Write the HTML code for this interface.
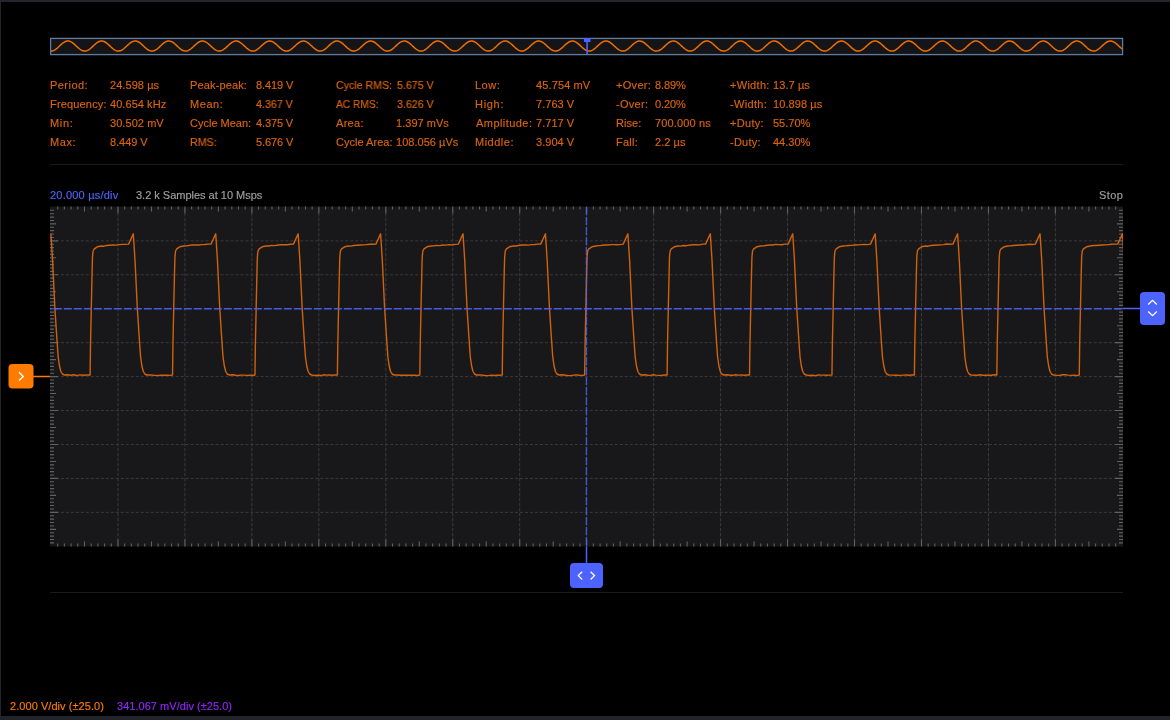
<!DOCTYPE html>
<html><head><meta charset="utf-8">
<style>
html,body{margin:0;padding:0;background:#000;}
body{width:1170px;height:720px;position:relative;overflow:hidden;font-family:"Liberation Sans",sans-serif;}
.t{position:absolute;font-size:11px;-webkit-text-stroke:0.15px currentColor;will-change:transform;line-height:15px;white-space:nowrap;color:#dc650c;}
#topb{position:absolute;left:0;top:0;width:1170px;height:2px;background:#23242c;}
#leftb{position:absolute;left:0;top:0;width:1px;height:720px;background:#23242c;}
#botb{position:absolute;left:0;top:716px;width:1170px;height:4px;background:#22232b;}
.sep{position:absolute;left:50px;width:1073px;height:1px;background:#1b1b1d;}
.btn{position:absolute;border-radius:4px;}
svg{position:absolute;left:0;top:0;}
</style></head><body>
<div id="topb"></div><div id="leftb"></div><div id="botb"></div>
<div class="t" style="left:49.88px;top:78px;letter-spacing:0.459px;">Period:</div><div class="t" style="left:110.38px;top:78px;letter-spacing:0.062px;">24.598 µs</div><div class="t" style="left:49.88px;top:97px;letter-spacing:0.168px;">Frequency:</div><div class="t" style="left:110.38px;top:97px;letter-spacing:0.055px;">40.654 kHz</div><div class="t" style="left:50.12px;top:116px;letter-spacing:0.667px;">Min:</div><div class="t" style="left:110.38px;top:116px;letter-spacing:0.062px;">30.502 mV</div><div class="t" style="left:50.12px;top:135px;letter-spacing:0.584px;">Max:</div><div class="t" style="left:110.38px;top:135px;letter-spacing:-0.042px;">8.449 V</div><div class="t" style="left:189.88px;top:78px;letter-spacing:0.140px;">Peak-peak:</div><div class="t" style="left:255.88px;top:78px;letter-spacing:-0.084px;">8.419 V</div><div class="t" style="left:189.88px;top:97px;letter-spacing:0.562px;">Mean:</div><div class="t" style="left:256.38px;top:97px;transform:scaleX(0.9736);transform-origin:0 0;">4.367 V</div><div class="t" style="left:190.38px;top:116px;">Cycle Mean:</div><div class="t" style="left:255.62px;top:116px;letter-spacing:-0.124px;">4.375 V</div><div class="t" style="left:189.88px;top:135px;transform:scaleX(0.9712);transform-origin:0 0;">RMS:</div><div class="t" style="left:255.88px;top:135px;letter-spacing:-0.084px;">5.676 V</div><div class="t" style="left:335.62px;top:78px;transform:scaleX(0.9650);transform-origin:0 0;">Cycle RMS:</div><div class="t" style="left:396.62px;top:78px;transform:scaleX(0.9667);transform-origin:0 0;">5.675 V</div><div class="t" style="left:335.62px;top:97px;transform:scaleX(0.9278);transform-origin:0 0;">AC RMS:</div><div class="t" style="left:396.62px;top:97px;transform:scaleX(0.9667);transform-origin:0 0;">3.626 V</div><div class="t" style="left:335.62px;top:116px;letter-spacing:0.312px;">Area:</div><div class="t" style="left:396.12px;top:116px;letter-spacing:0.033px;">1.397 mVs</div><div class="t" style="left:335.62px;top:135px;letter-spacing:0.025px;">Cycle Area:</div><div class="t" style="left:396.12px;top:135px;letter-spacing:0.025px;">108.056 µVs</div><div class="t" style="left:475.38px;top:78px;letter-spacing:0.500px;">Low:</div><div class="t" style="left:536.38px;top:78px;letter-spacing:0.125px;">45.754 mV</div><div class="t" style="left:475.38px;top:97px;letter-spacing:0.688px;">High:</div><div class="t" style="left:535.88px;top:97px;letter-spacing:0.042px;">7.763 V</div><div class="t" style="left:476.38px;top:116px;letter-spacing:0.444px;">Amplitude:</div><div class="t" style="left:535.88px;top:116px;letter-spacing:0.042px;">7.717 V</div><div class="t" style="left:475.38px;top:135px;letter-spacing:0.501px;">Middle:</div><div class="t" style="left:535.88px;top:135px;letter-spacing:0.042px;">3.904 V</div><div class="t" style="left:616.12px;top:78px;letter-spacing:0.300px;">+Over:</div><div class="t" style="left:654.62px;top:78px;letter-spacing:-0.125px;">8.89%</div><div class="t" style="left:616.12px;top:97px;letter-spacing:0.300px;">-Over:</div><div class="t" style="left:654.62px;top:97px;letter-spacing:-0.125px;">0.20%</div><div class="t" style="left:615.62px;top:116px;letter-spacing:0.062px;">Rise:</div><div class="t" style="left:654.62px;top:116px;letter-spacing:0.140px;">700.000 ns</div><div class="t" style="left:615.62px;top:135px;letter-spacing:0.250px;">Fall:</div><div class="t" style="left:654.62px;top:135px;letter-spacing:0.050px;">2.2 µs</div><div class="t" style="left:730.12px;top:78px;letter-spacing:0.291px;">+Width:</div><div class="t" style="left:772.88px;top:78px;letter-spacing:0.084px;">13.7 µs</div><div class="t" style="left:730.12px;top:97px;letter-spacing:0.334px;">-Width:</div><div class="t" style="left:772.88px;top:97px;letter-spacing:0.092px;">10.898 µs</div><div class="t" style="left:730.12px;top:116px;letter-spacing:0.300px;">+Duty:</div><div class="t" style="left:773.38px;top:116px;">55.70%</div><div class="t" style="left:730.12px;top:135px;letter-spacing:0.250px;">-Duty:</div><div class="t" style="left:773.38px;top:135px;">44.30%</div><div class="t" style="left:50.38px;top:188px;letter-spacing:0.209px;color:#5064fa;">20.000 µs/div</div><div class="t" style="left:136.38px;top:188px;letter-spacing:-0.011px;color:#a0a0a0;">3.2 k Samples at 10 Msps</div><div class="t" style="left:1099.12px;top:188px;letter-spacing:0.417px;color:#a0a0a0;">Stop</div><div class="t" style="left:9.88px;top:699px;letter-spacing:0.055px;color:#ff7a00;">2.000 V/div (±25.0)</div><div class="t" style="left:116.62px;top:699px;letter-spacing:0.036px;color:#9226f8;">341.067 mV/div (±25.0)</div>
<div class="sep" style="top:164px"></div>
<div class="sep" style="top:592px"></div>
<svg width="1170" height="720" viewBox="0 0 1170 720">
 <rect x="50.6" y="38.4" width="1072" height="16.2" fill="#151517" stroke="#5d7ba3" stroke-width="1.3"/>
 <path d="M51 51.1 L52 51.03 L53 50.78 L54 50.37 L55 49.81 L56 49.12 L57 48.32 L58 47.44 L59 46.51 L60 45.57 L61 44.65 L62 43.77 L63 42.97 L64 42.28 L65 41.72 L66 41.31 L67 41.07 L68 41 L69 41.11 L70 41.38 L71 41.82 L72 42.41 L73 43.12 L74 43.94 L75 44.83 L76 45.76 L77 46.7 L78 47.62 L79 48.48 L80 49.26 L81 49.93 L82 50.46 L83 50.84 L84 51.06 L85 51.09 L86 50.96 L87 50.65 L88 50.18 L89 49.57 L90 48.83 L91 48 L92 47.1 L93 46.17 L94 45.23 L95 44.31 L96 43.46 L97 42.7 L98 42.06 L99 41.55 L100 41.2 L101 41.02 L102 41.02 L103 41.19 L104 41.53 L105 42.02 L106 42.66 L107 43.42 L108 44.26 L109 45.17 L110 46.11 L111 47.05 L112 47.95 L113 48.78 L114 49.53 L115 50.15 L116 50.62 L117 50.94 L118 51.09 L119 51.06 L120 50.86 L121 50.49 L122 49.97 L123 49.31 L124 48.53 L125 47.67 L126 46.76 L127 45.82 L128 44.88 L129 43.99 L130 43.17 L131 42.45 L132 41.85 L133 41.41 L134 41.12 L135 41 L136 41.06 L137 41.3 L138 41.69 L139 42.24 L140 42.93 L141 43.72 L142 44.59 L143 45.52 L144 46.46 L145 47.39 L146 48.27 L147 49.07 L148 49.77 L149 50.34 L150 50.76 L151 51.02 L152 51.1 L153 51.01 L154 50.74 L155 50.31 L156 49.74 L157 49.03 L158 48.22 L159 47.34 L160 46.41 L161 45.47 L162 44.55 L163 43.68 L164 42.89 L165 42.21 L166 41.67 L167 41.28 L168 41.05 L169 41 L170 41.13 L171 41.42 L172 41.88 L173 42.48 L174 43.21 L175 44.03 L176 44.93 L177 45.86 L178 46.8 L179 47.72 L180 48.57 L181 49.34 L182 50 L183 50.51 L184 50.87 L185 51.07 L186 51.09 L187 50.93 L188 50.6 L189 50.12 L190 49.49 L191 48.74 L192 47.9 L193 47 L194 46.06 L195 45.12 L196 44.22 L197 43.38 L198 42.63 L199 42 L200 41.51 L201 41.18 L202 41.02 L203 41.03 L204 41.22 L205 41.58 L206 42.09 L207 42.74 L208 43.5 L209 44.36 L210 45.27 L211 46.21 L212 47.15 L213 48.04 L214 48.87 L215 49.6 L216 50.21 L217 50.67 L218 50.97 L219 51.1 L220 51.05 L221 50.83 L222 50.44 L223 49.9 L224 49.23 L225 48.44 L226 47.58 L227 46.65 L228 45.71 L229 44.78 L230 43.9 L231 43.09 L232 42.38 L233 41.8 L234 41.37 L235 41.1 L236 41 L237 41.08 L238 41.33 L239 41.75 L240 42.31 L241 43.01 L242 43.81 L243 44.69 L244 45.62 L245 46.56 L246 47.49 L247 48.36 L248 49.15 L249 49.84 L250 50.39 L251 50.8 L252 51.03 L253 51.1 L254 50.99 L255 50.7 L256 50.26 L257 49.67 L258 48.95 L259 48.13 L260 47.24 L261 46.31 L262 45.37 L263 44.45 L264 43.59 L265 42.81 L266 42.15 L267 41.62 L268 41.25 L269 41.04 L270 41.01 L271 41.15 L272 41.47 L273 41.94 L274 42.56 L275 43.3 L276 44.13 L277 45.03 L278 45.97 L279 46.91 L280 47.82 L281 48.66 L282 49.42 L283 50.06 L284 50.56 L285 50.9 L286 51.08 L287 51.08 L288 50.9 L289 50.56 L290 50.06 L291 49.41 L292 48.66 L293 47.81 L294 46.9 L295 45.96 L296 45.02 L297 44.12 L298 43.29 L299 42.55 L300 41.94 L301 41.46 L302 41.15 L303 41.01 L304 41.04 L305 41.25 L306 41.62 L307 42.15 L308 42.82 L309 43.59 L310 44.46 L311 45.38 L312 46.32 L313 47.25 L314 48.14 L315 48.96 L316 49.67 L317 50.26 L318 50.71 L319 50.99 L320 51.1 L321 51.03 L322 50.79 L323 50.39 L324 49.83 L325 49.15 L326 48.35 L327 47.48 L328 46.55 L329 45.61 L330 44.68 L331 43.8 L332 43 L333 42.31 L334 41.74 L335 41.33 L336 41.08 L337 41 L338 41.1 L339 41.37 L340 41.8 L341 42.38 L342 43.09 L343 43.91 L344 44.79 L345 45.72 L346 46.66 L347 47.58 L348 48.45 L349 49.23 L350 49.91 L351 50.45 L352 50.83 L353 51.05 L354 51.09 L355 50.96 L356 50.66 L357 50.2 L358 49.59 L359 48.86 L360 48.04 L361 47.14 L362 46.2 L363 45.26 L364 44.35 L365 43.5 L366 42.73 L367 42.08 L368 41.57 L369 41.22 L370 41.03 L371 41.02 L372 41.18 L373 41.51 L374 42 L375 42.63 L376 43.38 L377 44.23 L378 45.13 L379 46.07 L380 47.01 L381 47.91 L382 48.75 L383 49.5 L384 50.12 L385 50.61 L386 50.93 L387 51.09 L388 51.07 L389 50.87 L390 50.51 L391 49.99 L392 49.34 L393 48.57 L394 47.71 L395 46.79 L396 45.85 L397 44.92 L398 44.03 L399 43.2 L400 42.48 L401 41.88 L402 41.42 L403 41.13 L404 41 L405 41.06 L406 41.28 L407 41.68 L408 42.22 L409 42.9 L410 43.69 L411 44.56 L412 45.48 L413 46.42 L414 47.35 L415 48.23 L416 49.04 L417 49.74 L418 50.32 L419 50.75 L420 51.01 L421 51.1 L422 51.01 L423 50.76 L424 50.33 L425 49.76 L426 49.06 L427 48.26 L428 47.38 L429 46.45 L430 45.51 L431 44.58 L432 43.71 L433 42.92 L434 42.24 L435 41.69 L436 41.29 L437 41.06 L438 41 L439 41.12 L440 41.41 L441 41.86 L442 42.46 L443 43.18 L444 44 L445 44.89 L446 45.83 L447 46.77 L448 47.68 L449 48.54 L450 49.31 L451 49.97 L452 50.5 L453 50.86 L454 51.06 L455 51.09 L456 50.94 L457 50.62 L458 50.14 L459 49.52 L460 48.78 L461 47.94 L462 47.04 L463 46.1 L464 45.16 L465 44.25 L466 43.41 L467 42.65 L468 42.02 L469 41.52 L470 41.19 L471 41.02 L472 41.03 L473 41.21 L474 41.56 L475 42.06 L476 42.71 L477 43.47 L478 44.32 L479 45.24 L480 46.18 L481 47.11 L482 48.01 L483 48.84 L484 49.57 L485 50.18 L486 50.65 L487 50.96 L488 51.09 L489 51.05 L490 50.84 L491 50.46 L492 49.93 L493 49.26 L494 48.48 L495 47.61 L496 46.69 L497 45.75 L498 44.82 L499 43.93 L500 43.12 L501 42.4 L502 41.82 L503 41.38 L504 41.1 L505 41 L506 41.07 L507 41.32 L508 41.73 L509 42.29 L510 42.98 L511 43.78 L512 44.66 L513 45.58 L514 46.52 L515 47.45 L516 48.33 L517 49.12 L518 49.81 L519 50.37 L520 50.78 L521 51.03 L522 51.1 L523 50.99 L524 50.72 L525 50.28 L526 49.69 L527 48.98 L528 48.16 L529 47.28 L530 46.34 L531 45.4 L532 44.48 L533 43.62 L534 42.84 L535 42.17 L536 41.64 L537 41.26 L538 41.05 L539 41.01 L540 41.14 L541 41.45 L542 41.92 L543 42.53 L544 43.26 L545 44.1 L546 44.99 L547 45.93 L548 46.87 L549 47.78 L550 48.63 L551 49.39 L552 50.04 L553 50.54 L554 50.89 L555 51.07 L556 51.08 L557 50.91 L558 50.57 L559 50.08 L560 49.44 L561 48.69 L562 47.84 L563 46.93 L564 46 L565 45.06 L566 44.16 L567 43.32 L568 42.58 L569 41.96 L570 41.48 L571 41.16 L572 41.01 L573 41.04 L574 41.24 L575 41.61 L576 42.13 L577 42.79 L578 43.56 L579 44.42 L580 45.34 L581 46.28 L582 47.21 L583 48.1 L584 48.93 L585 49.65 L586 50.24 L587 50.69 L588 50.98 L589 51.1 L590 51.04 L591 50.81 L592 50.41 L593 49.86 L594 49.18 L595 48.38 L596 47.51 L597 46.59 L598 45.65 L599 44.72 L600 43.84 L601 43.03 L602 42.33 L603 41.76 L604 41.34 L605 41.08 L606 41 L607 41.09 L608 41.36 L609 41.78 L610 42.36 L611 43.06 L612 43.87 L613 44.76 L614 45.68 L615 46.63 L616 47.55 L617 48.42 L618 49.21 L619 49.88 L620 50.43 L621 50.82 L622 51.04 L623 51.1 L624 50.97 L625 50.68 L626 50.22 L627 49.62 L628 48.89 L629 48.07 L630 47.18 L631 46.24 L632 45.3 L633 44.39 L634 43.53 L635 42.76 L636 42.11 L637 41.59 L638 41.23 L639 41.03 L640 41.01 L641 41.17 L642 41.5 L643 41.98 L644 42.61 L645 43.35 L646 44.19 L647 45.1 L648 46.03 L649 46.97 L650 47.88 L651 48.72 L652 49.47 L653 50.1 L654 50.59 L655 50.92 L656 51.08 L657 51.07 L658 50.88 L659 50.53 L660 50.01 L661 49.36 L662 48.6 L663 47.75 L664 46.83 L665 45.89 L666 44.96 L667 44.06 L668 43.23 L669 42.5 L670 41.9 L671 41.44 L672 41.13 L673 41.01 L674 41.05 L675 41.27 L676 41.66 L677 42.2 L678 42.87 L679 43.65 L680 44.52 L681 45.44 L682 46.38 L683 47.31 L684 48.2 L685 49.01 L686 49.72 L687 50.3 L688 50.73 L689 51 L690 51.1 L691 51.02 L692 50.77 L693 50.35 L694 49.79 L695 49.09 L696 48.29 L697 47.41 L698 46.49 L699 45.54 L700 44.62 L701 43.74 L702 42.95 L703 42.26 L704 41.71 L705 41.31 L706 41.07 L707 41 L708 41.11 L709 41.39 L710 41.84 L711 42.43 L712 43.15 L713 43.97 L714 44.86 L715 45.79 L716 46.73 L717 47.65 L718 48.51 L719 49.29 L720 49.95 L721 50.48 L722 50.85 L723 51.06 L724 51.09 L725 50.95 L726 50.63 L727 50.16 L728 49.55 L729 48.81 L730 47.97 L731 47.07 L732 46.14 L733 45.2 L734 44.29 L735 43.44 L736 42.68 L737 42.04 L738 41.54 L739 41.2 L740 41.02 L741 41.02 L742 41.2 L743 41.54 L744 42.04 L745 42.68 L746 43.44 L747 44.29 L748 45.2 L749 46.14 L750 47.07 L751 47.97 L752 48.81 L753 49.55 L754 50.16 L755 50.63 L756 50.95 L757 51.09 L758 51.06 L759 50.85 L760 50.48 L761 49.95 L762 49.29 L763 48.51 L764 47.65 L765 46.73 L766 45.79 L767 44.86 L768 43.97 L769 43.15 L770 42.43 L771 41.84 L772 41.39 L773 41.11 L774 41 L775 41.07 L776 41.31 L777 41.71 L778 42.26 L779 42.95 L780 43.74 L781 44.62 L782 45.54 L783 46.49 L784 47.41 L785 48.29 L786 49.09 L787 49.79 L788 50.35 L789 50.77 L790 51.02 L791 51.1 L792 51 L793 50.73 L794 50.3 L795 49.72 L796 49.01 L797 48.2 L798 47.31 L799 46.38 L800 45.44 L801 44.52 L802 43.65 L803 42.87 L804 42.2 L805 41.66 L806 41.27 L807 41.05 L808 41.01 L809 41.13 L810 41.44 L811 41.9 L812 42.5 L813 43.23 L814 44.06 L815 44.96 L816 45.89 L817 46.83 L818 47.75 L819 48.6 L820 49.36 L821 50.01 L822 50.53 L823 50.88 L824 51.07 L825 51.08 L826 50.92 L827 50.59 L828 50.1 L829 49.47 L830 48.72 L831 47.88 L832 46.97 L833 46.03 L834 45.1 L835 44.19 L836 43.35 L837 42.61 L838 41.98 L839 41.5 L840 41.17 L841 41.01 L842 41.03 L843 41.23 L844 41.59 L845 42.11 L846 42.76 L847 43.53 L848 44.39 L849 45.3 L850 46.24 L851 47.18 L852 48.07 L853 48.89 L854 49.62 L855 50.22 L856 50.68 L857 50.97 L858 51.1 L859 51.04 L860 50.82 L861 50.43 L862 49.88 L863 49.21 L864 48.42 L865 47.55 L866 46.63 L867 45.68 L868 44.76 L869 43.87 L870 43.06 L871 42.36 L872 41.78 L873 41.36 L874 41.09 L875 41 L876 41.08 L877 41.34 L878 41.76 L879 42.33 L880 43.03 L881 43.84 L882 44.72 L883 45.65 L884 46.59 L885 47.51 L886 48.38 L887 49.18 L888 49.86 L889 50.41 L890 50.81 L891 51.04 L892 51.1 L893 50.98 L894 50.69 L895 50.24 L896 49.65 L897 48.93 L898 48.1 L899 47.21 L900 46.28 L901 45.34 L902 44.42 L903 43.56 L904 42.79 L905 42.13 L906 41.61 L907 41.24 L908 41.04 L909 41.01 L910 41.16 L911 41.48 L912 41.96 L913 42.58 L914 43.32 L915 44.16 L916 45.06 L917 46 L918 46.93 L919 47.84 L920 48.69 L921 49.44 L922 50.08 L923 50.57 L924 50.91 L925 51.08 L926 51.07 L927 50.89 L928 50.54 L929 50.04 L930 49.39 L931 48.63 L932 47.78 L933 46.87 L934 45.93 L935 44.99 L936 44.1 L937 43.26 L938 42.53 L939 41.92 L940 41.45 L941 41.14 L942 41.01 L943 41.05 L944 41.26 L945 41.64 L946 42.17 L947 42.84 L948 43.62 L949 44.48 L950 45.4 L951 46.34 L952 47.28 L953 48.16 L954 48.98 L955 49.69 L956 50.28 L957 50.72 L958 50.99 L959 51.1 L960 51.03 L961 50.78 L962 50.37 L963 49.81 L964 49.12 L965 48.33 L966 47.45 L967 46.52 L968 45.58 L969 44.66 L970 43.78 L971 42.98 L972 42.29 L973 41.73 L974 41.32 L975 41.07 L976 41 L977 41.1 L978 41.38 L979 41.82 L980 42.4 L981 43.12 L982 43.93 L983 44.82 L984 45.75 L985 46.69 L986 47.61 L987 48.48 L988 49.26 L989 49.93 L990 50.46 L991 50.84 L992 51.05 L993 51.09 L994 50.96 L995 50.65 L996 50.18 L997 49.57 L998 48.84 L999 48.01 L1000 47.11 L1001 46.18 L1002 45.24 L1003 44.32 L1004 43.47 L1005 42.71 L1006 42.06 L1007 41.56 L1008 41.21 L1009 41.03 L1010 41.02 L1011 41.19 L1012 41.52 L1013 42.02 L1014 42.65 L1015 43.41 L1016 44.25 L1017 45.16 L1018 46.1 L1019 47.04 L1020 47.94 L1021 48.78 L1022 49.52 L1023 50.14 L1024 50.62 L1025 50.94 L1026 51.09 L1027 51.06 L1028 50.86 L1029 50.5 L1030 49.97 L1031 49.31 L1032 48.54 L1033 47.68 L1034 46.77 L1035 45.83 L1036 44.89 L1037 44 L1038 43.18 L1039 42.46 L1040 41.86 L1041 41.41 L1042 41.12 L1043 41 L1044 41.06 L1045 41.29 L1046 41.69 L1047 42.24 L1048 42.92 L1049 43.71 L1050 44.58 L1051 45.51 L1052 46.45 L1053 47.38 L1054 48.26 L1055 49.06 L1056 49.76 L1057 50.33 L1058 50.76 L1059 51.01 L1060 51.1 L1061 51.01 L1062 50.75 L1063 50.32 L1064 49.74 L1065 49.04 L1066 48.23 L1067 47.35 L1068 46.42 L1069 45.48 L1070 44.56 L1071 43.69 L1072 42.9 L1073 42.22 L1074 41.68 L1075 41.28 L1076 41.06 L1077 41 L1078 41.13 L1079 41.42 L1080 41.88 L1081 42.48 L1082 43.2 L1083 44.03 L1084 44.92 L1085 45.85 L1086 46.79 L1087 47.71 L1088 48.57 L1089 49.34 L1090 49.99 L1091 50.51 L1092 50.87 L1093 51.07 L1094 51.09 L1095 50.93 L1096 50.61 L1097 50.12 L1098 49.5 L1099 48.75 L1100 47.91 L1101 47.01 L1102 46.07 L1103 45.13 L1104 44.23 L1105 43.38 L1106 42.63 L1107 42 L1108 41.51 L1109 41.18 L1110 41.02 L1111 41.03 L1112 41.22 L1113 41.57 L1114 42.08 L1115 42.73 L1116 43.5 L1117 44.35 L1118 45.26 L1119 46.2 L1120 47.14 L1121 48.04 L1122 48.86" fill="none" stroke="#ee6e00" stroke-width="1.5"/>
 <rect x="584" y="38" width="6.5" height="4" fill="#4d63ff"/>
 <rect x="586.3" y="38" width="1.6" height="16" fill="#4d63ff"/>
 <rect x="50" y="206.5" width="1073" height="340" fill="#18181b"/>
 <g stroke="#3a3a3d" stroke-width="1" stroke-dasharray="3.5 1.5" stroke-dashoffset="3.6"><line x1="117.96" y1="206.5" x2="117.96" y2="546.5"/><line x1="184.92" y1="206.5" x2="184.92" y2="546.5"/><line x1="251.88" y1="206.5" x2="251.88" y2="546.5"/><line x1="318.84" y1="206.5" x2="318.84" y2="546.5"/><line x1="385.8" y1="206.5" x2="385.8" y2="546.5"/><line x1="452.76" y1="206.5" x2="452.76" y2="546.5"/><line x1="519.72" y1="206.5" x2="519.72" y2="546.5"/><line x1="586.68" y1="206.5" x2="586.68" y2="546.5"/><line x1="653.64" y1="206.5" x2="653.64" y2="546.5"/><line x1="720.6" y1="206.5" x2="720.6" y2="546.5"/><line x1="787.56" y1="206.5" x2="787.56" y2="546.5"/><line x1="854.52" y1="206.5" x2="854.52" y2="546.5"/><line x1="921.48" y1="206.5" x2="921.48" y2="546.5"/><line x1="988.44" y1="206.5" x2="988.44" y2="546.5"/><line x1="1055.4" y1="206.5" x2="1055.4" y2="546.5"/></g>
 <g stroke="#3a3a3d" stroke-width="1" stroke-dasharray="3 1.99" stroke-dashoffset="4.07"><line x1="50" y1="240.84" x2="1123" y2="240.84"/><line x1="50" y1="274.78" x2="1123" y2="274.78"/><line x1="50" y1="342.66" x2="1123" y2="342.66"/><line x1="50" y1="376.6" x2="1123" y2="376.6"/><line x1="50" y1="410.54" x2="1123" y2="410.54"/><line x1="50" y1="444.48" x2="1123" y2="444.48"/><line x1="50" y1="478.42" x2="1123" y2="478.42"/><line x1="50" y1="512.36" x2="1123" y2="512.36"/></g>
 <path d="M57.7 206.5v3M57.7 546.5v-3M64.39 206.5v3M64.39 546.5v-3M71.09 206.5v3M71.09 546.5v-3M77.78 206.5v3M77.78 546.5v-3M84.48 206.5v5M84.48 546.5v-5M91.18 206.5v3M91.18 546.5v-3M97.87 206.5v3M97.87 546.5v-3M104.57 206.5v3M104.57 546.5v-3M111.26 206.5v3M111.26 546.5v-3M117.96 206.5v7M117.96 546.5v-7M124.66 206.5v3M124.66 546.5v-3M131.35 206.5v3M131.35 546.5v-3M138.05 206.5v3M138.05 546.5v-3M144.74 206.5v3M144.74 546.5v-3M151.44 206.5v5M151.44 546.5v-5M158.14 206.5v3M158.14 546.5v-3M164.83 206.5v3M164.83 546.5v-3M171.53 206.5v3M171.53 546.5v-3M178.22 206.5v3M178.22 546.5v-3M184.92 206.5v7M184.92 546.5v-7M191.62 206.5v3M191.62 546.5v-3M198.31 206.5v3M198.31 546.5v-3M205.01 206.5v3M205.01 546.5v-3M211.7 206.5v3M211.7 546.5v-3M218.4 206.5v5M218.4 546.5v-5M225.1 206.5v3M225.1 546.5v-3M231.79 206.5v3M231.79 546.5v-3M238.49 206.5v3M238.49 546.5v-3M245.18 206.5v3M245.18 546.5v-3M251.88 206.5v7M251.88 546.5v-7M258.58 206.5v3M258.58 546.5v-3M265.27 206.5v3M265.27 546.5v-3M271.97 206.5v3M271.97 546.5v-3M278.66 206.5v3M278.66 546.5v-3M285.36 206.5v5M285.36 546.5v-5M292.06 206.5v3M292.06 546.5v-3M298.75 206.5v3M298.75 546.5v-3M305.45 206.5v3M305.45 546.5v-3M312.14 206.5v3M312.14 546.5v-3M318.84 206.5v7M318.84 546.5v-7M325.54 206.5v3M325.54 546.5v-3M332.23 206.5v3M332.23 546.5v-3M338.93 206.5v3M338.93 546.5v-3M345.62 206.5v3M345.62 546.5v-3M352.32 206.5v5M352.32 546.5v-5M359.02 206.5v3M359.02 546.5v-3M365.71 206.5v3M365.71 546.5v-3M372.41 206.5v3M372.41 546.5v-3M379.1 206.5v3M379.1 546.5v-3M385.8 206.5v7M385.8 546.5v-7M392.5 206.5v3M392.5 546.5v-3M399.19 206.5v3M399.19 546.5v-3M405.89 206.5v3M405.89 546.5v-3M412.58 206.5v3M412.58 546.5v-3M419.28 206.5v5M419.28 546.5v-5M425.98 206.5v3M425.98 546.5v-3M432.67 206.5v3M432.67 546.5v-3M439.37 206.5v3M439.37 546.5v-3M446.06 206.5v3M446.06 546.5v-3M452.76 206.5v7M452.76 546.5v-7M459.46 206.5v3M459.46 546.5v-3M466.15 206.5v3M466.15 546.5v-3M472.85 206.5v3M472.85 546.5v-3M479.54 206.5v3M479.54 546.5v-3M486.24 206.5v5M486.24 546.5v-5M492.94 206.5v3M492.94 546.5v-3M499.63 206.5v3M499.63 546.5v-3M506.33 206.5v3M506.33 546.5v-3M513.02 206.5v3M513.02 546.5v-3M519.72 206.5v7M519.72 546.5v-7M526.42 206.5v3M526.42 546.5v-3M533.11 206.5v3M533.11 546.5v-3M539.81 206.5v3M539.81 546.5v-3M546.5 206.5v3M546.5 546.5v-3M553.2 206.5v5M553.2 546.5v-5M559.9 206.5v3M559.9 546.5v-3M566.59 206.5v3M566.59 546.5v-3M573.29 206.5v3M573.29 546.5v-3M579.98 206.5v3M579.98 546.5v-3M586.68 206.5v7M586.68 546.5v-7M593.38 206.5v3M593.38 546.5v-3M600.07 206.5v3M600.07 546.5v-3M606.77 206.5v3M606.77 546.5v-3M613.46 206.5v3M613.46 546.5v-3M620.16 206.5v5M620.16 546.5v-5M626.86 206.5v3M626.86 546.5v-3M633.55 206.5v3M633.55 546.5v-3M640.25 206.5v3M640.25 546.5v-3M646.94 206.5v3M646.94 546.5v-3M653.64 206.5v7M653.64 546.5v-7M660.34 206.5v3M660.34 546.5v-3M667.03 206.5v3M667.03 546.5v-3M673.73 206.5v3M673.73 546.5v-3M680.42 206.5v3M680.42 546.5v-3M687.12 206.5v5M687.12 546.5v-5M693.82 206.5v3M693.82 546.5v-3M700.51 206.5v3M700.51 546.5v-3M707.21 206.5v3M707.21 546.5v-3M713.9 206.5v3M713.9 546.5v-3M720.6 206.5v7M720.6 546.5v-7M727.3 206.5v3M727.3 546.5v-3M733.99 206.5v3M733.99 546.5v-3M740.69 206.5v3M740.69 546.5v-3M747.38 206.5v3M747.38 546.5v-3M754.08 206.5v5M754.08 546.5v-5M760.78 206.5v3M760.78 546.5v-3M767.47 206.5v3M767.47 546.5v-3M774.17 206.5v3M774.17 546.5v-3M780.86 206.5v3M780.86 546.5v-3M787.56 206.5v7M787.56 546.5v-7M794.26 206.5v3M794.26 546.5v-3M800.95 206.5v3M800.95 546.5v-3M807.65 206.5v3M807.65 546.5v-3M814.34 206.5v3M814.34 546.5v-3M821.04 206.5v5M821.04 546.5v-5M827.74 206.5v3M827.74 546.5v-3M834.43 206.5v3M834.43 546.5v-3M841.13 206.5v3M841.13 546.5v-3M847.82 206.5v3M847.82 546.5v-3M854.52 206.5v7M854.52 546.5v-7M861.22 206.5v3M861.22 546.5v-3M867.91 206.5v3M867.91 546.5v-3M874.61 206.5v3M874.61 546.5v-3M881.3 206.5v3M881.3 546.5v-3M888 206.5v5M888 546.5v-5M894.7 206.5v3M894.7 546.5v-3M901.39 206.5v3M901.39 546.5v-3M908.09 206.5v3M908.09 546.5v-3M914.78 206.5v3M914.78 546.5v-3M921.48 206.5v7M921.48 546.5v-7M928.18 206.5v3M928.18 546.5v-3M934.87 206.5v3M934.87 546.5v-3M941.57 206.5v3M941.57 546.5v-3M948.26 206.5v3M948.26 546.5v-3M954.96 206.5v5M954.96 546.5v-5M961.66 206.5v3M961.66 546.5v-3M968.35 206.5v3M968.35 546.5v-3M975.05 206.5v3M975.05 546.5v-3M981.74 206.5v3M981.74 546.5v-3M988.44 206.5v7M988.44 546.5v-7M995.14 206.5v3M995.14 546.5v-3M1001.83 206.5v3M1001.83 546.5v-3M1008.53 206.5v3M1008.53 546.5v-3M1015.22 206.5v3M1015.22 546.5v-3M1021.92 206.5v5M1021.92 546.5v-5M1028.62 206.5v3M1028.62 546.5v-3M1035.31 206.5v3M1035.31 546.5v-3M1042.01 206.5v3M1042.01 546.5v-3M1048.7 206.5v3M1048.7 546.5v-3M1055.4 206.5v7M1055.4 546.5v-7M1062.1 206.5v3M1062.1 546.5v-3M1068.79 206.5v3M1068.79 546.5v-3M1075.49 206.5v3M1075.49 546.5v-3M1082.18 206.5v3M1082.18 546.5v-3M1088.88 206.5v5M1088.88 546.5v-5M1095.58 206.5v3M1095.58 546.5v-3M1102.27 206.5v3M1102.27 546.5v-3M1108.97 206.5v3M1108.97 546.5v-3M1115.66 206.5v3M1115.66 546.5v-3M50 210.29h4M1123 210.29h-4M50 213.69h4M1123 213.69h-4M50 217.08h4M1123 217.08h-4M50 220.48h4M1123 220.48h-4M50 223.87h6M1123 223.87h-6M50 227.26h4M1123 227.26h-4M50 230.66h4M1123 230.66h-4M50 234.05h4M1123 234.05h-4M50 237.45h4M1123 237.45h-4M50 240.84h8M1123 240.84h-8M50 244.23h4M1123 244.23h-4M50 247.63h4M1123 247.63h-4M50 251.02h4M1123 251.02h-4M50 254.42h4M1123 254.42h-4M50 257.81h6M1123 257.81h-6M50 261.2h4M1123 261.2h-4M50 264.6h4M1123 264.6h-4M50 267.99h4M1123 267.99h-4M50 271.39h4M1123 271.39h-4M50 274.78h8M1123 274.78h-8M50 278.17h4M1123 278.17h-4M50 281.57h4M1123 281.57h-4M50 284.96h4M1123 284.96h-4M50 288.36h4M1123 288.36h-4M50 291.75h6M1123 291.75h-6M50 295.14h4M1123 295.14h-4M50 298.54h4M1123 298.54h-4M50 301.93h4M1123 301.93h-4M50 305.33h4M1123 305.33h-4M50 308.72h8M1123 308.72h-8M50 312.11h4M1123 312.11h-4M50 315.51h4M1123 315.51h-4M50 318.9h4M1123 318.9h-4M50 322.3h4M1123 322.3h-4M50 325.69h6M1123 325.69h-6M50 329.08h4M1123 329.08h-4M50 332.48h4M1123 332.48h-4M50 335.87h4M1123 335.87h-4M50 339.27h4M1123 339.27h-4M50 342.66h8M1123 342.66h-8M50 346.05h4M1123 346.05h-4M50 349.45h4M1123 349.45h-4M50 352.84h4M1123 352.84h-4M50 356.24h4M1123 356.24h-4M50 359.63h6M1123 359.63h-6M50 363.02h4M1123 363.02h-4M50 366.42h4M1123 366.42h-4M50 369.81h4M1123 369.81h-4M50 373.21h4M1123 373.21h-4M50 376.6h8M1123 376.6h-8M50 379.99h4M1123 379.99h-4M50 383.39h4M1123 383.39h-4M50 386.78h4M1123 386.78h-4M50 390.18h4M1123 390.18h-4M50 393.57h6M1123 393.57h-6M50 396.96h4M1123 396.96h-4M50 400.36h4M1123 400.36h-4M50 403.75h4M1123 403.75h-4M50 407.15h4M1123 407.15h-4M50 410.54h8M1123 410.54h-8M50 413.93h4M1123 413.93h-4M50 417.33h4M1123 417.33h-4M50 420.72h4M1123 420.72h-4M50 424.12h4M1123 424.12h-4M50 427.51h6M1123 427.51h-6M50 430.9h4M1123 430.9h-4M50 434.3h4M1123 434.3h-4M50 437.69h4M1123 437.69h-4M50 441.09h4M1123 441.09h-4M50 444.48h8M1123 444.48h-8M50 447.87h4M1123 447.87h-4M50 451.27h4M1123 451.27h-4M50 454.66h4M1123 454.66h-4M50 458.06h4M1123 458.06h-4M50 461.45h6M1123 461.45h-6M50 464.84h4M1123 464.84h-4M50 468.24h4M1123 468.24h-4M50 471.63h4M1123 471.63h-4M50 475.03h4M1123 475.03h-4M50 478.42h8M1123 478.42h-8M50 481.81h4M1123 481.81h-4M50 485.21h4M1123 485.21h-4M50 488.6h4M1123 488.6h-4M50 492h4M1123 492h-4M50 495.39h6M1123 495.39h-6M50 498.78h4M1123 498.78h-4M50 502.18h4M1123 502.18h-4M50 505.57h4M1123 505.57h-4M50 508.97h4M1123 508.97h-4M50 512.36h8M1123 512.36h-8M50 515.75h4M1123 515.75h-4M50 519.15h4M1123 519.15h-4M50 522.54h4M1123 522.54h-4M50 525.94h4M1123 525.94h-4M50 529.33h6M1123 529.33h-6M50 532.72h4M1123 532.72h-4M50 536.12h4M1123 536.12h-4M50 539.51h4M1123 539.51h-4M50 542.91h4M1123 542.91h-4" stroke="#616164" stroke-width="1.1" fill="none"/>
  <clipPath id="pc"><rect x="50" y="194.5" width="1073" height="364"/></clipPath>
 <path d="M50.87 233.8 L52.57 260 L54.87 308 L56.97 340 L58.17 357 L59.47 366 L60.87 371.5 L62.37 374 L64.37 375 L67.62 374.76 L70.87 375.3 L73.54 374.8 L76.2 375.47 L78.87 375.1 L81.87 374.98 L84.87 375.3 L87.47 374.91 L90.07 375 L90.1 375 L90.5 345 L91.3 308 L92.1 272 L92.5 257 L93.1 251 L94.3 248.8 L97.3 246.8 L101.3 246 L103.8 246.2 L106.3 245.5 L109.8 245.22 L113.3 245 L116.3 245.1 L119.3 244.6 L122.4 244.41 L125.5 244.39 L128.6 244.1 L133.3 233.8 L135 260 L137.3 308 L139.4 340 L140.6 357 L141.9 366 L143.3 371.5 L144.8 374 L146.8 375 L150.05 374.84 L153.3 375.3 L155.97 375.35 L158.63 375.5 L161.3 375.1 L164.3 375.22 L167.3 375.3 L169.9 375.37 L172.5 375 L172.53 375 L172.93 345 L173.73 308 L174.53 272 L174.93 257 L175.53 251 L176.73 248.8 L179.73 246.8 L183.73 246 L186.23 245.9 L188.73 245.5 L192.23 244.86 L195.73 245 L198.73 245.03 L201.73 244.6 L204.83 244.52 L207.93 244.09 L211.03 244.1 L215.73 233.8 L217.43 260 L219.73 308 L221.83 340 L223.03 357 L224.33 366 L225.73 371.5 L227.23 374 L229.23 375 L232.48 374.73 L235.73 375.3 L238.4 375.56 L241.06 375.14 L243.73 375.1 L246.73 375.4 L249.73 375.3 L252.33 375.49 L254.93 375 L254.96 375 L255.36 345 L256.16 308 L256.96 272 L257.36 257 L257.96 251 L259.16 248.8 L262.16 246.8 L266.16 246 L268.66 245.94 L271.16 245.5 L274.66 245.63 L278.16 245 L281.16 244.71 L284.16 244.6 L287.26 244.7 L290.36 244.22 L293.46 244.1 L298.16 233.8 L299.86 260 L302.16 308 L304.26 340 L305.46 357 L306.76 366 L308.16 371.5 L309.66 374 L311.66 375 L314.91 375.54 L318.16 375.3 L320.83 375.57 L323.49 374.8 L326.16 375.1 L329.16 374.87 L332.16 375.3 L334.76 374.9 L337.36 375 L337.39 375 L337.79 345 L338.59 308 L339.39 272 L339.79 257 L340.39 251 L341.59 248.8 L344.59 246.8 L348.59 246 L351.09 246.17 L353.59 245.5 L357.09 245.19 L360.59 245 L363.59 244.91 L366.59 244.6 L369.69 244.25 L372.79 244.27 L375.89 244.1 L380.59 233.8 L382.29 260 L384.59 308 L386.69 340 L387.89 357 L389.19 366 L390.59 371.5 L392.09 374 L394.09 375 L397.34 375.05 L400.59 375.3 L403.26 375.1 L405.92 375.24 L408.59 375.1 L411.59 375.28 L414.59 375.3 L417.19 375.51 L419.79 375 L419.82 375 L420.22 345 L421.02 308 L421.82 272 L422.22 257 L422.82 251 L424.02 248.8 L427.02 246.8 L431.02 246 L433.52 245.91 L436.02 245.5 L439.52 245.64 L443.02 245 L446.02 245.12 L449.02 244.6 L452.12 244.88 L455.22 244.42 L458.32 244.1 L463.02 233.8 L464.72 260 L467.02 308 L469.12 340 L470.32 357 L471.62 366 L473.02 371.5 L474.52 374 L476.52 375 L479.77 374.85 L483.02 375.3 L485.69 375.56 L488.35 375.58 L491.02 375.1 L494.02 375.56 L497.02 375.3 L499.62 375.21 L502.22 375 L502.25 375 L502.65 345 L503.45 308 L504.25 272 L504.65 257 L505.25 251 L506.45 248.8 L509.45 246.8 L513.45 246 L515.95 245.94 L518.45 245.5 L521.95 244.99 L525.45 245 L528.45 245.1 L531.45 244.6 L534.55 244.5 L537.65 244.07 L540.75 244.1 L545.45 233.8 L547.15 260 L549.45 308 L551.55 340 L552.75 357 L554.05 366 L555.45 371.5 L556.95 374 L558.95 375 L562.2 374.76 L565.45 375.3 L568.12 375.55 L570.78 375.61 L573.45 375.1 L576.45 374.83 L579.45 375.3 L582.05 375.42 L584.65 375 L584.68 375 L585.08 345 L585.88 308 L586.68 272 L587.08 257 L587.68 251 L588.88 248.8 L591.88 246.8 L595.88 246 L598.38 245.67 L600.88 245.5 L604.38 244.94 L607.88 245 L610.88 244.61 L613.88 244.6 L616.98 244.68 L620.08 244.6 L623.18 244.1 L627.88 233.8 L629.58 260 L631.88 308 L633.98 340 L635.18 357 L636.48 366 L637.88 371.5 L639.38 374 L641.38 375 L644.63 374.74 L647.88 375.3 L650.55 375.34 L653.21 374.76 L655.88 375.1 L658.88 375.4 L661.88 375.3 L664.48 375 L667.08 375 L667.11 375 L667.51 345 L668.31 308 L669.11 272 L669.51 257 L670.11 251 L671.31 248.8 L674.31 246.8 L678.31 246 L680.81 246.09 L683.31 245.5 L686.81 245.68 L690.31 245 L693.31 244.8 L696.31 244.6 L699.41 244.88 L702.51 244.1 L705.61 244.1 L710.31 233.8 L712.01 260 L714.31 308 L716.41 340 L717.61 357 L718.91 366 L720.31 371.5 L721.81 374 L723.81 375 L727.06 374.77 L730.31 375.3 L732.98 375.32 L735.64 374.74 L738.31 375.1 L741.31 374.93 L744.31 375.3 L746.91 375.07 L749.51 375 L749.54 375 L749.94 345 L750.74 308 L751.54 272 L751.94 257 L752.54 251 L753.74 248.8 L756.74 246.8 L760.74 246 L763.24 245.85 L765.74 245.5 L769.24 244.94 L772.74 245 L775.74 244.39 L778.74 244.6 L781.84 244.76 L784.94 244.1 L788.04 244.1 L792.74 233.8 L794.44 260 L796.74 308 L798.84 340 L800.04 357 L801.34 366 L802.74 371.5 L804.24 374 L806.24 375 L809.49 375.56 L812.74 375.3 L815.41 375.59 L818.07 375.06 L820.74 375.1 L823.74 375.16 L826.74 375.3 L829.34 375.17 L831.94 375 L831.97 375 L832.37 345 L833.17 308 L833.97 272 L834.37 257 L834.97 251 L836.17 248.8 L839.17 246.8 L843.17 246 L845.67 245.88 L848.17 245.5 L851.67 245.34 L855.17 245 L858.17 244.85 L861.17 244.6 L864.27 244.54 L867.37 244.66 L870.47 244.1 L875.17 233.8 L876.87 260 L879.17 308 L881.27 340 L882.47 357 L883.77 366 L885.17 371.5 L886.67 374 L888.67 375 L891.92 375.16 L895.17 375.3 L897.84 375.17 L900.5 375.36 L903.17 375.1 L906.17 374.96 L909.17 375.3 L911.77 374.97 L914.37 375 L914.4 375 L914.8 345 L915.6 308 L916.4 272 L916.8 257 L917.4 251 L918.6 248.8 L921.6 246.8 L925.6 246 L928.1 246.18 L930.6 245.5 L934.1 245.27 L937.6 245 L940.6 244.84 L943.6 244.6 L946.7 243.99 L949.8 244.19 L952.9 244.1 L957.6 233.8 L959.3 260 L961.6 308 L963.7 340 L964.9 357 L966.2 366 L967.6 371.5 L969.1 374 L971.1 375 L974.35 375.22 L977.6 375.3 L980.27 374.8 L982.93 375.27 L985.6 375.1 L988.6 375.32 L991.6 375.3 L994.2 374.75 L996.8 375 L996.83 375 L997.23 345 L998.03 308 L998.83 272 L999.23 257 L999.83 251 L1001.03 248.8 L1004.03 246.8 L1008.03 246 L1010.53 245.86 L1013.03 245.5 L1016.53 245.22 L1020.03 245 L1023.03 244.96 L1026.03 244.6 L1029.13 244.3 L1032.23 244.45 L1035.33 244.1 L1040.03 233.8 L1041.73 260 L1044.03 308 L1046.13 340 L1047.33 357 L1048.63 366 L1050.03 371.5 L1051.53 374 L1053.53 375 L1056.78 375.36 L1060.03 375.3 L1062.7 374.8 L1065.36 374.77 L1068.03 375.1 L1071.03 375.36 L1074.03 375.3 L1076.63 375.57 L1079.23 375 L1079.26 375 L1079.66 345 L1080.46 308 L1081.26 272 L1081.66 257 L1082.26 251 L1083.46 248.8 L1086.46 246.8 L1090.46 246 L1092.96 245.53 L1095.46 245.5 L1098.96 245.21 L1102.46 245 L1105.46 244.88 L1108.46 244.6 L1111.56 244.27 L1114.66 244.14 L1117.76 244.1 L1122.46 233.8 L1124.16 260" fill="none" stroke="#d0620c" stroke-width="1.4" stroke-linejoin="round" clip-path="url(#pc)"/>
 <line x1="50" y1="308.7" x2="1123" y2="308.7" stroke="#4d63ff" stroke-width="1.4" stroke-dasharray="8 2" stroke-dashoffset="6.2" opacity="0.9"/>
 <line x1="586.4" y1="206.5" x2="586.4" y2="546.5" stroke="#4d63ff" stroke-width="1.4" stroke-dasharray="8 2" stroke-dashoffset="9.5" opacity="0.75"/>
 <!-- orange trigger -->
 <line x1="33" y1="376.5" x2="50" y2="376.5" stroke="#ff7a00" stroke-width="1.5"/>
 <rect x="8.5" y="364" width="25" height="24.5" rx="4" fill="#ff7a00"/>
 <path d="M19 372.2 L23.2 376.4 L19 380.6" fill="none" stroke="#fff" stroke-width="1.4"/>
 <!-- right blue -->
 <line x1="1123" y1="308.5" x2="1141" y2="308.5" stroke="#4d63ff" stroke-width="1.5"/>
 <rect x="1140" y="292" width="25" height="33" rx="4" fill="#4d63ff"/>
 <path d="M1148.2 304.5 L1152.5 300.3 L1156.8 304.5 M1148.2 311.5 L1152.5 315.7 L1156.8 311.5" fill="none" stroke="#fff" stroke-width="1.3"/>
 <!-- bottom blue -->
 <line x1="586.5" y1="546.5" x2="586.5" y2="563" stroke="#4d63ff" stroke-width="1.5"/>
 <rect x="570" y="563" width="33" height="25" rx="4" fill="#4d63ff"/>
 <path d="M582.2 571.7 L578.3 575.6 L582.2 579.5 M590.6 571.7 L594.5 575.6 L590.6 579.5" fill="none" stroke="#fff" stroke-width="1.3"/>
</svg>
</body></html>
